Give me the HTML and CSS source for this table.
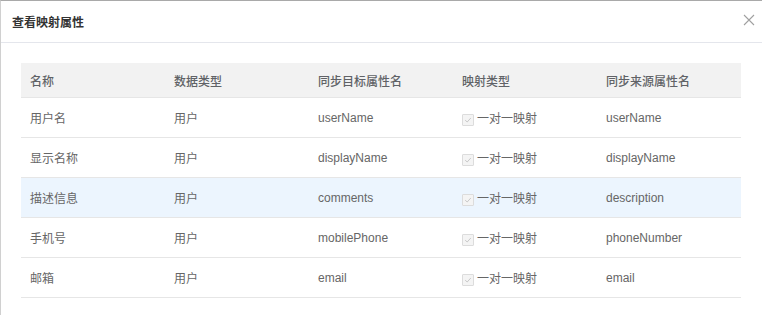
FILE: index.html
```html
<!DOCTYPE html>
<html lang="zh-CN">
<head>
    <meta charset="UTF-8">
    <title>查看映射属性</title>
    <link rel="stylesheet" href="styles.css">
</head>
<body>
    <div class="dialog">
        <div class="dialog-header">
            <span class="dialog-title">查看映射属性</span>
            <span class="close-btn">
                <svg width="12" height="12" viewBox="0 0 12 12"><path d="M1 1L11 11M11 1L1 11" stroke="#a0a0a0" stroke-width="1.1" fill="none"/></svg>
            </span>
        </div>
        <div class="dialog-body">
            <table class="map-table">
                <thead>
                    <tr>
                        <th>名称</th>
                        <th>数据类型</th>
                        <th>同步目标属性名</th>
                        <th>映射类型</th>
                        <th>同步来源属性名</th>
                    </tr>
                </thead>
                <tbody id="rows"></tbody>
            </table>
        </div>
    </div>
    <script>
        const rows = [
            ["用户名", "用户", "userName", "userName"],
            ["显示名称", "用户", "displayName", "displayName"],
            ["描述信息", "用户", "comments", "description"],
            ["手机号", "用户", "mobilePhone", "phoneNumber"],
            ["邮箱", "用户", "email", "email"]
        ];
        const tbody = document.getElementById("rows");
        rows.forEach((r, i) => {
            const tr = document.createElement("tr");
            if (i === 2) tr.className = "hover";
            tr.innerHTML = `
                <td>${r[0]}</td>
                <td>${r[1]}</td>
                <td>${r[2]}</td>
                <td><span class="check"><svg width="8" height="8" viewBox="0 0 8 8"><path d="M1.2 4.2L3.2 6L6.8 2" stroke="#c8c8c8" stroke-width="1" fill="none"/></svg></span>一对一映射</td>
                <td>${r[3]}</td>
            `;
            tbody.appendChild(tr);
        });
    </script>
</body>
</html>
```

FILE: styles.css
```css
html, body {
    margin: 0;
    padding: 0;
}

body {
    background: #fff;
    font-family: "Liberation Sans", Arial, "Noto Sans CJK SC", sans-serif;
    font-size: 12px;
    color: #666;
}

.dialog {
    width: 762px;
    height: 315px;
    box-sizing: border-box;
    border-top: 1px solid #a9a9a9;
    border-left: 1px solid #d0d0d0;
    background: #fff;
}

.dialog-header {
    height: 41px;
    display: flex;
    align-items: center;
    justify-content: space-between;
    padding: 0 7px 0 11px;
    border-bottom: 1px solid #e4e6ec;
}

.dialog-title {
    font-size: 12px;
    font-weight: bold;
    color: #333;
}

.close-btn {
    display: flex;
    margin-top: -4px;
}

.dialog-body {
    padding: 20px 20px 0 20px;
}

.map-table {
    width: 720px;
    border-collapse: collapse;
    table-layout: fixed;
}

.map-table th,
.map-table td {
    text-align: left;
    padding: 0 9px;
    border-bottom: 1px solid #e6e6e6;
}

.map-table th {
    height: 34px;
    background: #f2f2f2;
    font-weight: 500;
    color: #606266;
}

.map-table td {
    height: 39px;
    color: #666;
}

.map-table tr.hover td {
    background: #ecf5fe;
}

.check {
    display: inline-flex;
    align-items: center;
    justify-content: center;
    width: 10px;
    height: 10px;
    border: 1px solid #dcdcdc;
    background: #f4f4f4;
    border-radius: 1px;
    margin-right: 3px;
    vertical-align: -1px;
}
```
